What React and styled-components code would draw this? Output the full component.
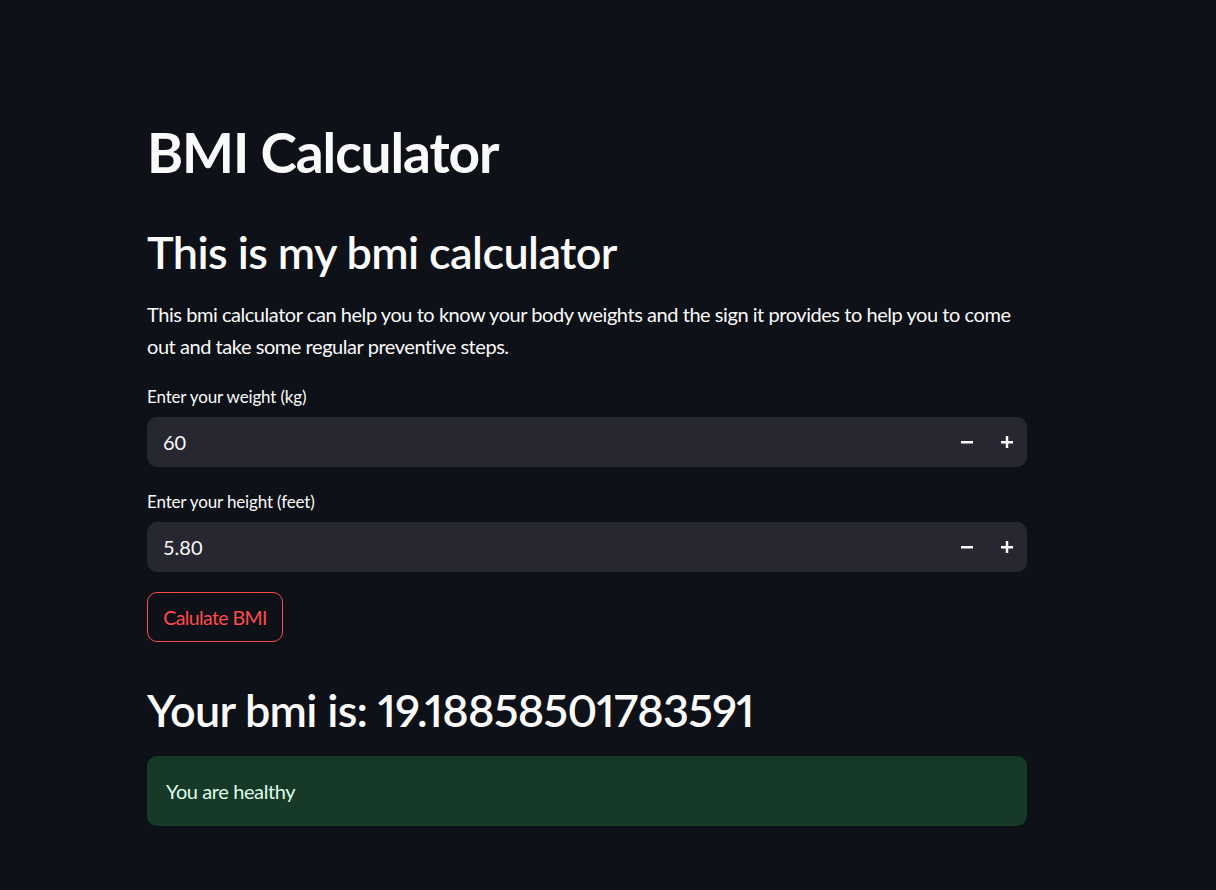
import React from "react";
import styled, { createGlobalStyle } from "styled-components";

const Global = createGlobalStyle`
  html, body { margin: 0; padding: 0; background: #0e1117; }
  body { font-family: "Lato", "Noto Sans", sans-serif; color: #fafafa; }
  * { box-sizing: border-box; }
`;

const Page = styled.main`
  min-height: 890px;
  background: #0e1117;
  padding: 119px 0 0 147px;
`;

const Column = styled.div`
  width: 880px;
  display: flex;
  flex-direction: column;
`;

const Title = styled.h1`
  margin: 0;
  font-size: 55px;
  font-weight: 700;
  line-height: 66px;
  letter-spacing: -1.1px;
`;

const Heading = styled.h2`
  margin: ${(p) => p.$mt}px 0 0;
  font-size: 45px;
  font-weight: 600;
  line-height: 54px;
  letter-spacing: ${(p) => p.$ls}px;
  font-variant-numeric: proportional-nums;
`;

const Para = styled.p`
  margin: 19px 0 0;
  font-size: 20px;
  line-height: 32px;
  letter-spacing: -0.45px;
`;

const Field = styled.div`
  display: flex;
  flex-direction: column;
  margin-top: ${(p) => p.$mt}px;
`;

const Label = styled.label`
  font-size: 17px;
  line-height: 24px;
  margin-bottom: 8px;
  letter-spacing: -0.15px;
`;

const InputBox = styled.div`
  height: 50px;
  background: #262730;
  border-radius: 10px;
  display: flex;
  align-items: center;
`;

const Value = styled.span`
  flex: 1;
  padding-left: 16px;
  font-size: 20px;
  color: #fafafa;
`;

const Step = styled.button`
  width: 40px;
  height: 50px;
  border: none;
  background: transparent;
  color: #fafafa;
  display: flex;
  align-items: center;
  justify-content: center;
  padding: 0;
  cursor: pointer;
`;

const Button = styled.button`
  align-self: flex-start;
  margin-top: 20px;
  height: 50px;
  width: 136px;
  border: 1px solid #ff4b4b;
  border-radius: 10px;
  background: transparent;
  color: #ff4b4b;
  font-family: inherit;
  font-size: 19.5px;
  letter-spacing: -0.6px;
`;

const Success = styled.div`
  margin-top: 19px;
  height: 70px;
  border-radius: 10px;
  background: #173928;
  color: #dffde9;
  font-size: 20px;
  letter-spacing: -0.4px;
  display: flex;
  align-items: center;
  padding-left: 19px;
`;

const Minus = () => (
  <svg width="14" height="14" viewBox="0 0 14 14">
    <rect x="1" y="6" width="12" height="2.5" fill="#fafafa" />
  </svg>
);
const Plus = () => (
  <svg width="14" height="14" viewBox="0 0 14 14">
    <rect x="1" y="6" width="12" height="2.5" fill="#fafafa" />
    <rect x="5.75" y="1" width="2.5" height="12" fill="#fafafa" />
  </svg>
);

const NumberInput = ({ label, value, mt }) => (
  <Field $mt={mt}>
    <Label>{label}</Label>
    <InputBox>
      <Value>{value}</Value>
      <Step><Minus /></Step>
      <Step><Plus /></Step>
    </InputBox>
  </Field>
);

export default function App() {
  return (
    <>
      <Global />
      <Page>
        <Column>
          <Title>BMI Calculator</Title>
          <Heading $mt={40} $ls={-0.6}>This is my bmi calculator</Heading>
          <Para>
            This bmi calculator can help you to know your body weights and the sign it provides to help you to come
            out and take some regular preventive steps.
          </Para>
          <NumberInput label="Enter your weight (kg)" value="60" mt={23} />
          <NumberInput label="Enter your height (feet)" value="5.80" mt={23} />
          <Button>Calulate BMI</Button>
          <Heading $mt={41} $ls={-0.7}>Your bmi is: 19.18858501783591</Heading>
          <Success>You are healthy</Success>
        </Column>
      </Page>
    </>
  );
}
